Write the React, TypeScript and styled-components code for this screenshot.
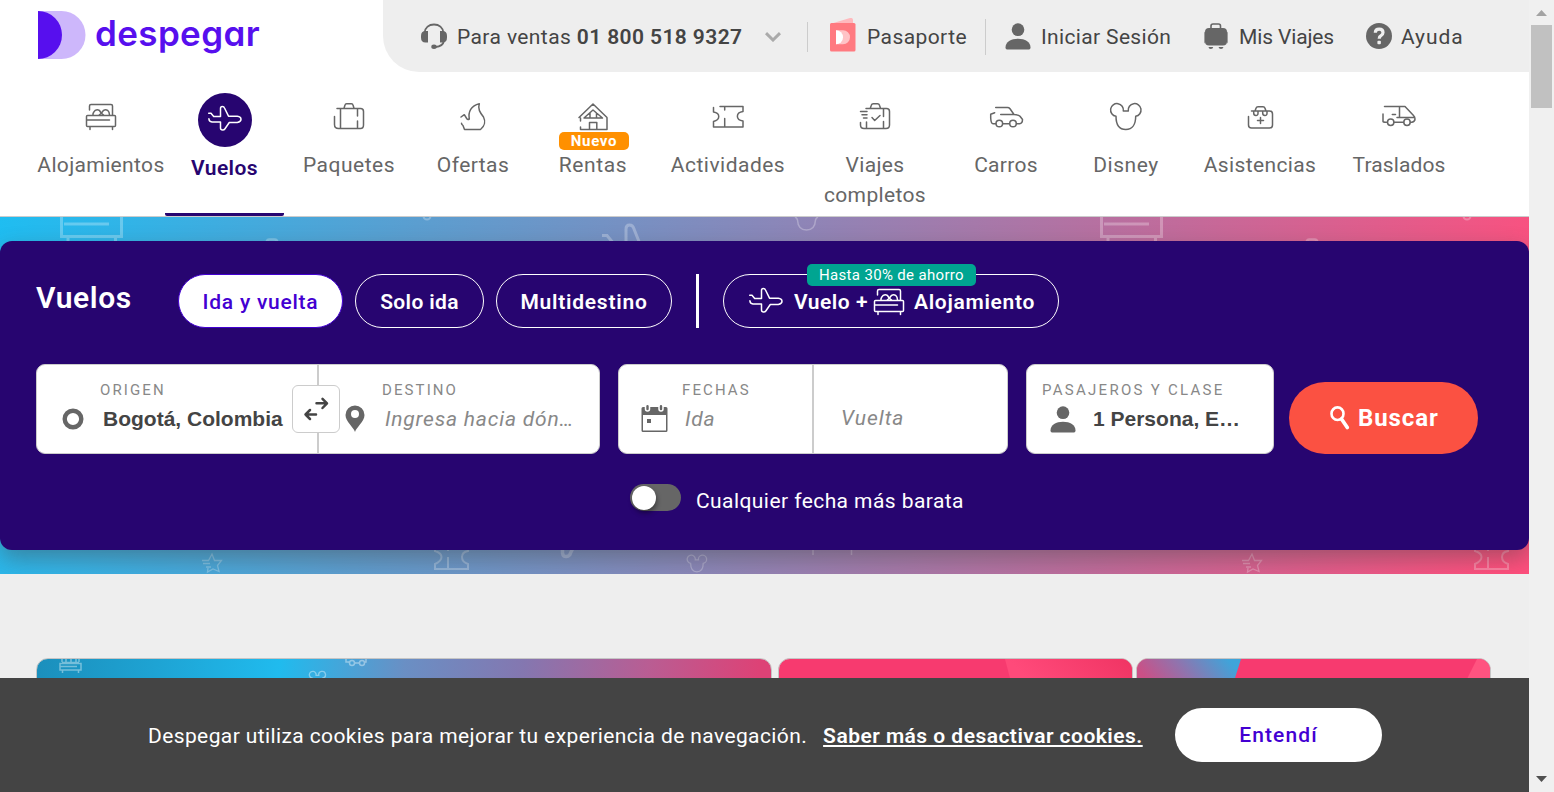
import React from 'react';
import styled, { createGlobalStyle, css } from 'styled-components';

const navy = '#270570';
const violet = '#4300d2';
const iconGray = '#666';

const GlobalStyle = createGlobalStyle`
  * { box-sizing: border-box; }
  body {
    margin: 0;
    overflow: hidden;
    background: #eee;
    font-family: Roboto, "Liberation Sans", sans-serif;
    font-size: 21px;
    line-height: 30px;
  }
  svg { display: block; flex: none; }
`;

const Window = styled.div`
  display: flex;
  width: 1554px;
  height: 792px;
  overflow: hidden;
`;

const Page = styled.div`
  display: flex;
  flex-direction: column;
  width: 1529px;
  height: 792px;
  background: #eee;
`;

const Text = styled.span<{ $track?: number; $width?: number }>`
  flex: none;
  white-space: nowrap;
  letter-spacing: ${(p) => p.$track ?? 0}px;
  ${(p) => p.$width && css`width: ${p.$width}px;`}
`;

/* ---------- header ---------- */

const Header = styled.header`
  flex: none;
  height: 217px;
  background: #fff;
  border-bottom: 1px solid #ccc;
`;

const HeaderTop = styled.div`
  display: flex;
  height: 72px;
`;

const Logo = styled.a`
  display: flex;
  width: 383px;
  padding: 11px 0 0 38px;
  color: #570fee;
`;

const LogoName = styled(Text)`
  margin-left: 9px;
  font: 600 35px/44px Inter, sans-serif;
  font-feature-settings: 'cv11';
`;

const TopBar = styled.div`
  display: flex;
  align-items: center;
  flex: 1;
  padding: 1px 0 0 38px;
  background: #eee;
  border-bottom-left-radius: 36px;
  color: #444;
`;

const TopItem = styled.div<{ $left?: number; $gap: number }>`
  display: flex;
  align-items: center;
  gap: ${(p) => p.$gap}px;
  margin-left: ${(p) => p.$left ?? 0}px;
`;

const SalesLine = styled(Text)`
  b { font-weight: 600; letter-spacing: 0.4px; }
`;

const TopDivider = styled.i<{ $left: number; $height: number }>`
  width: 1px;
  height: ${(p) => p.$height}px;
  margin-left: ${(p) => p.$left}px;
  background: #ccc;
`;

const Nav = styled.nav`
  display: flex;
  height: 144px;
  padding-left: 37px;
  color: #666;
`;

const NavItem = styled.a<{ $width: number; $active?: boolean }>`
  position: relative;
  display: flex;
  flex-direction: column;
  align-items: center;
  width: ${(p) => p.$width}px;
  height: 144px;
  padding-top: ${(p) => (p.$active ? 21 : 29)}px;
  text-align: center;
  ${(p) =>
    p.$active &&
    css`
      color: ${navy};
      font-weight: 600;
      border-bottom: 3px solid ${navy};
      border-radius: 2px;
    `}
`;

const NavLabel = styled.span<{ $track: number; $active?: boolean }>`
  margin-top: ${(p) => (p.$active ? 6 : 17)}px;
  letter-spacing: ${(p) => p.$track}px;
`;

const ActiveCircle = styled.span`
  display: grid;
  place-items: center;
  width: 54px;
  height: 54px;
  border-radius: 50%;
  background: ${navy};
`;

const NewBadge = styled.span`
  position: absolute;
  top: 60px;
  left: 27px;
  width: 70px;
  height: 18px;
  border-radius: 5px;
  background: #ff9000;
  color: #fff;
  font-size: 15px;
  font-weight: 700;
  line-height: 19px;
  letter-spacing: 0.7px;
`;

/* ---------- hero and search panel ---------- */

const Hero = styled.section`
  position: relative;
  flex: none;
  height: 357px;
  padding-top: 24px;
  overflow: hidden;
  background: linear-gradient(103deg, #1fbdf1 0%, #5b9ed0 26%, #8c86b8 49%, #c16b9b 73%, #ff4f7d 98%);
`;

const HeroArt = styled.svg`
  position: absolute;
  inset: 0;
`;

const Panel = styled.div`
  position: relative;
  height: 309px;
  padding: 33px 36px 0;
  border-radius: 12px;
  background: ${navy};
  box-shadow: 0 9px 22px rgba(70, 70, 70, 0.42);
  color: #fff;
`;

const Modes = styled.div`
  display: flex;
  height: 54px;
`;

const Title = styled.h1`
  width: 142px;
  margin: 0;
  padding-top: 9px;
  font-size: 30px;
  font-weight: 600;
  line-height: 30px;
  letter-spacing: 0.6px;
`;

const Pill = styled.button<{ $width: number; $track: number; $selected?: boolean }>`
  position: relative;
  display: flex;
  align-items: center;
  justify-content: center;
  width: ${(p) => p.$width}px;
  height: 54px;
  margin-right: 12px;
  padding: 2px 0 0;
  border: 1px solid ${(p) => (p.$selected ? violet : '#fff')};
  border-radius: 27px;
  background: ${(p) => (p.$selected ? '#fff' : 'transparent')};
  color: ${(p) => (p.$selected ? violet : '#fff')};
  font: ${(p) => (p.$selected ? 500 : 600)} 21px/30px Roboto, sans-serif;
  letter-spacing: ${(p) => p.$track}px;
`;

const ComboPill = styled(Pill)`
  justify-content: flex-start;
  padding-left: 24px;
`;

const ComboText = styled(Text)`
  margin-left: 7px;
`;

const Bar = styled.i`
  width: 3px;
  height: 54px;
  margin: 0 24px 0 12px;
  background: #fff;
`;

const SavingsBadge = styled.span`
  position: absolute;
  top: -11px;
  left: 83px;
  width: 169px;
  height: 22px;
  border-radius: 5px;
  background: #00a591;
  color: #fff;
  font: 400 15px/22px Roboto, sans-serif;
  letter-spacing: 0.33px;
`;

const Fields = styled.div`
  display: flex;
  align-items: flex-end;
  margin-top: 36px;
`;

const FieldBox = styled.div<{ $width: number; $after: number }>`
  position: relative;
  display: flex;
  width: ${(p) => p.$width}px;
  height: 90px;
  margin-right: ${(p) => p.$after}px;
  border: 1px solid #ccc;
  border-radius: 9px;
  background: #fff;
`;

const Cell = styled.div<{ $width?: number; $divided?: boolean }>`
  ${(p) => (p.$width ? css`width: ${p.$width}px;` : css`flex: 1;`)}
  padding-top: 15px;
  ${(p) => p.$divided && css`border-right: 2px solid #ccc;`}
`;

const FieldLabel = styled.div<{ $left: number; $track: number }>`
  padding-left: ${(p) => p.$left}px;
  color: #888;
  font-size: 15px;
  line-height: 20px;
  letter-spacing: ${(p) => p.$track}px;
`;

const FieldRow = styled.div<{ $left: number; $gap?: number; $top?: number }>`
  display: flex;
  align-items: center;
  gap: ${(p) => p.$gap ?? 0}px;
  height: 30px;
  margin-top: ${(p) => p.$top ?? 4}px;
  padding-left: ${(p) => p.$left}px;
`;

const Value = styled.span`
  white-space: nowrap;
  color: #444;
  font-family: 'Liberation Sans', Arial, sans-serif;
  font-weight: 700;
`;

const Placeholder = styled(Text)`
  color: #888;
  font-style: italic;
`;

const SwapButton = styled.button`
  position: absolute;
  top: 20px;
  left: 255px;
  width: 48px;
  height: 48px;
  padding: 0;
  border: 1px solid #ccc;
  border-radius: 6px;
  background: #fff;
`;

const SearchButton = styled.button`
  display: flex;
  align-items: center;
  width: 189px;
  height: 72px;
  padding: 0 0 0 40px;
  border: 0;
  border-radius: 36px;
  background: #fb5142;
  color: #fff;
  font: 700 24px/30px Roboto, sans-serif;
  letter-spacing: 0.9px;
`;

const FlexibleDates = styled.label`
  display: flex;
  align-items: flex-start;
  margin: 30px 0 0 594px;
`;

const Switch = styled.span`
  width: 51px;
  height: 27px;
  margin-right: 15px;
  padding: 1.5px;
  border-radius: 14px;
  background: #666;

  &::before {
    content: '';
    display: block;
    width: 24px;
    height: 24px;
    border-radius: 50%;
    background: #fff;
    box-shadow: 1px 3px 5px rgba(0, 0, 0, 0.4);
  }
`;

const FlexibleText = styled(Text)`
  margin-top: 2px;
`;

/* ---------- promo cards ---------- */

const Promos = styled.section`
  display: flex;
  flex: none;
  height: 104px;
  padding: 84px 0 0 36px;
  overflow: hidden;
`;

const PromoCard = styled.a<{ $width: number; $after: number }>`
  flex: none;
  width: ${(p) => p.$width}px;
  height: 40px;
  margin-right: ${(p) => p.$after}px;
  overflow: hidden;
  border: 1px solid #c5c5c5;
  border-radius: 12px;
  background: #f73a6f;
`;

const DealsCard = styled(PromoCard)`
  background: linear-gradient(95deg, #1b8fbc 0%, #1ea3d3 16%, #20bbee 33%, #6a8fc4 50%, #8477b0 66%, #b95d93 83%, #dd4276 98%);
`;

/* ---------- cookie notice ---------- */

const CookieBar = styled.footer`
  display: flex;
  flex: none;
  align-items: center;
  height: 114px;
  padding: 1px 0 0 148px;
  background: #444;
  color: #fff;
`;

const CookieLink = styled.a`
  margin-left: 16px;
  white-space: nowrap;
  font-weight: 600;
  letter-spacing: 0.47px;
  text-decoration: underline;
  text-decoration-thickness: 2px;
  text-underline-offset: 2px;
`;

const AcceptButton = styled.button`
  width: 207px;
  height: 54px;
  margin: -1px 0 0 auto;
  padding: 0;
  border: 0;
  border-radius: 27px;
  background: #fff;
  color: ${violet};
  font: 500 21px/30px Roboto, sans-serif;
  letter-spacing: 1.1px;
`;

const CookieContent = styled.div`
  display: flex;
  align-items: center;
  width: 1234px;
`;

/* ---------- scrollbar ---------- */

const Scrollbar = styled.aside`
  display: flex;
  flex-direction: column;
  align-items: center;
  width: 25px;
  height: 792px;
  padding: 10px 0;
  background: #f0f0f0;
`;

const Thumb = styled.div`
  width: 21px;
  height: 83px;
  margin: 9px 0 auto;
  background: #c1c1c1;
`;

/* ---------- icons ---------- */

const LineIcon = ({ children, color = iconGray }: { children: React.ReactNode; color?: string }) => (
  <svg width="36" height="32" viewBox="0 0 36 32" fill="none" stroke={color} strokeWidth="1.5" strokeLinecap="round" strokeLinejoin="round">
    {children}
  </svg>
);

const bed = (
  <g transform="translate(0 -1)">
    <path d="M6.5 10V6Q6.5 4.5 8 4.5H28Q29.5 4.5 29.5 6V15" />
    <path d="M10 15v-1.3Q10.300 12.500 12.300 10.300Q14.300 9 16.300 10.300L18.300 13.200L20.600 10.300Q22.600 9 24.600 10.300Q26.500 12 26.500 15M16.300 15l2-1.800 2.200 1.800" />
    <rect x="3.500" y="15.500" width="29" height="11" rx="1" />
    <path d="M4 20H26.500M7 27v2.500M29.500 27v2.500" />
  </g>
);

const plane = (
  <path d="M1.700 9.300H4L6.700 12.500H13.500V4.500Q13.500 2.500 15.300 2.500Q17 2.500 17.500 4L21.500 12.200H30.300Q34 12.700 34 15.200T30.300 18.500H22.300L17.800 25Q17.200 26 15.700 26Q13.500 26 13.500 24V18H5Q1.900 17.500 1.900 14.800" />
);

const mickey = 'M15.300 10A6.400 6.400 0 1 0 8 15.300C8 23 11 28.600 17.800 28.600C24.500 28.600 27.700 23 27.700 15.300A6.400 6.400 0 1 0 20.300 10Z';
const ticket = 'M10 5.500H33V10.500C25.500 11.500 25.500 19 33 20V26H3.500V20.500C10.500 18.500 10.500 12 3.500 11V6.500M14.700 5.500V9M14.700 17.500V26';

const luggage = <path d="M6 7.500H29.500Q32.500 7.500 32.500 10.500V24Q32.500 27.500 29.500 27.500H7.500Q3.500 27.500 3.500 23.500V15.500M9.500 7.500V27M26.500 7.500V15M26.500 20V27M13 7.200L14 4Q14.300 2.700 15.500 2.700H20.500Q21.700 2.700 22 4L23 7.200" />;

const flame = <path d="M6 16L9.300 13.700L11.700 17.500Q12.700 19 14.300 18C13 11 16 4.500 24.300 2.700C22.500 8 25 11.500 28.500 16C30.500 20 30 25 25.500 28.500H9.500L8 24.500Q6.500 23.500 6.500 22.300" />;

const house = <path d="M4 16.500L18 3L32 16.500M9 17L18 9L27.500 17ZM15 17V12M21.500 17V12M32 17V28.500H20.500M5.500 17V20M5.500 26V28.500H20.500M14.500 28.500V21.500H21.800V28.500" />;

const express = <path d="M9 7.500H29.500Q32.500 7.500 32.500 10.500V24Q32.500 27.500 29 27.500H7Q3.500 27.500 3.500 24V21.500M9.500 21V27.300M26.500 7.500V15.500M26.500 20.500V27.300M3.500 10.500H10M5 13.800H10M6.500 17H10M15 16.500L17.700 19.500L23 14.500M13.300 7.200L14.300 4.300Q14.800 2.700 16.300 2.700H20.500Q22 2.700 22.500 4.300L23.500 7.200" />;

const car = (
  <>
    <path d="M7.700 6.500H19.500Q21 6.500 22 7.700L26 13.500H12.700M26 13.500Q31 14 32 15.200L34.500 18.500Q34.500 22.500 31.500 22.700H28.500M6.700 11.700L2.700 13.200V17Q3 22.700 5 22.700H7.800M14.800 22.700H21.500" />
    <circle cx="11.300" cy="22.500" r="3.300" />
    <circle cx="25" cy="22.500" r="3.300" />
  </>
);

const medkit = <path d="M9.500 10H27.500Q30.500 10 30.500 13V24Q30.500 27 27.500 27H9.500Q6.500 27 6.500 24V15.500M13 10L14 7.200Q14.500 5.700 16 5.700H21Q22.500 5.700 23 7.200L24 10M11.700 10V12Q11.700 14.500 13.900 14.500T16 12V10M20.700 10V12Q20.700 14.500 22.900 14.500T25 12V10M18.500 16.500V22.500M15.500 19.500H21.500" />;

const van = (
  <>
    <path d="M3.500 5.500H24L32.500 14.500Q34 16 34 18Q34 20.500 31 21.300H29.500M18.500 5.500V16.500M16 16.500H33M2 13V20.500Q2 21.300 5.500 21.300M13 21.300H22.500M11.300 13.500H14.500" />
    <circle cx="9.700" cy="21.300" r="3.200" />
    <circle cx="26" cy="21.300" r="3.200" />
  </>
);

const PersonIcon = () => (
  <svg width="26" height="27" viewBox="0 0 26 27" fill={iconGray}>
    <ellipse cx="13" cy="6.700" rx="6.300" ry="6.400" />
    <path d="M.5 24.500C.5 18.500 6 15.700 13 15.700S25.500 18.500 25.500 24.500Q25.500 26.500 24 26.500H2Q.5 26.500 .5 24.500Z" />
  </svg>
);

const HeadsetIcon = () => (
  <svg width="26" height="27" viewBox="0 0 26 27">
    <path d="M3.500 10C4 4.500 8 1.500 13 1.500S22 4.500 22.500 10M23 17.500Q22 23.500 14.500 24" fill="none" stroke={iconGray} strokeWidth="1.800" />
    <path d="M7 8V19.500H4.500Q0 19.500 0 14.500V13Q0 8 4.500 8ZM19 8V19.500H21.500Q26 19.500 26 14.500V13Q26 8 21.500 8Z" fill={iconGray} />
    <ellipse cx="13" cy="23.800" rx="2.700" ry="2.200" fill={iconGray} />
  </svg>
);

const PassportIcon = () => (
  <svg width="26" height="38" viewBox="0 0 26 38">
    <path d="M0 6L20 0Q23 -.5 23 2V8H0Z" fill="#ffb9bd" />
    <rect y="5" width="25.500" height="28.500" rx="1.500" fill="#ff7a80" />
    <path d="M6 12.300H13A7 7 0 0 1 13 26.300H6Z" fill="#ffc3c6" />
    <path d="M6 12.300A7 7 0 0 1 6 26.300Z" fill="#fff" />
  </svg>
);

const SuitcaseIcon = () => (
  <svg width="26" height="28" viewBox="0 0 26 28" fill={iconGray}>
    <path d="M8 5.500V3Q8 1 10 1H15.500Q17.500 1 17.500 3V5.500" fill="none" stroke={iconGray} strokeWidth="1.600" />
    <rect x="2" y="5" width="22" height="17.500" rx="4" />
    <path d="M1 9.500V19.500L1.600 20.500V8.500ZM25 9.500V19.500L24.400 20.500V8.500ZM5.500 24H10.200Q10 26 7.800 26T5.500 24ZM15.500 24H20.500Q20 26 18 26T15.500 24Z" />
  </svg>
);

const HelpIcon = () => (
  <svg width="26" height="27" viewBox="0 0 26 27">
    <circle cx="13" cy="13" r="13" fill={iconGray} />
    <path d="M9.300 9.800Q9.300 6.200 13.200 6.200Q17 6.200 17 9.500Q17 11.500 15 12.600Q13.200 13.600 13.200 15.700" fill="none" stroke="#eee" strokeWidth="3.200" />
    <rect x="11.400" y="17.800" width="3.500" height="3.500" rx="1" fill="#eee" />
  </svg>
);

const HeroPattern = () => (
  <g fill="none" stroke="#fff" strokeOpacity="0.28">
    <path strokeWidth="3" d="M61.500 -10V19.500H121.500V-10M64 7H109M68 21V30M115.500 21V30" />
    <path strokeWidth="2.500" d="M266.500 30V26Q266.500 22.500 269.500 22.500H274.500Q277.500 22.500 277.500 26V30" />
    <circle cx="427" cy="-1" r="3.500" strokeWidth="2" />
    <path strokeWidth="3" d="M602 18.500H607L614 27M626 27V12Q626 8 629.500 8T634 12L640 27" />
    <path strokeWidth="1.500" d="M795 0Q797 1 797.500 3Q798 13 806.500 13T815.500 3Q816 1 818 0" />
    <path strokeWidth="3.500" d="M562.500 330V336Q563 340 566.500 339.500T570.500 336L573.500 330" />
    <path strokeWidth="1.500" d="M813 330V338M851.500 330V338" />
    <path strokeWidth="1.300" d="M202 343.500H208.500L212 337L214.500 343.500H221.500L217.500 348.500L219 354.500L213 352L207.500 355L208 351M203 346.500H210M206 350H211" />
    <path strokeWidth="2" d="M435 330V334Q441.500 336 441.500 340T435 347V352H468V347Q462 345 462 340T468 334V330M448 330V334M448 340V352" />
    <path strokeWidth="2" transform="translate(685.500 336.500) scale(.64)" d={mickey} />
  </g>
);

/* ---------- data ---------- */

type NavEntry = { label: string; width: number; track: number; icon: React.ReactNode; active?: boolean; badge?: string };

const navEntries: NavEntry[] = [
  { label: 'Alojamientos', width: 128, track: 0.36, icon: bed },
  { label: 'Vuelos', width: 119, track: 0.4, icon: plane, active: true },
  { label: 'Paquetes', width: 130, track: 0.52, icon: luggage },
  { label: 'Ofertas', width: 118, track: 0.42, icon: flame },
  { label: 'Rentas', width: 122, track: 0.6, icon: house, badge: 'Nuevo' },
  { label: 'Actividades', width: 148, track: 0.48, icon: <path d={ticket} /> },
  { label: 'Viajes completos', width: 146, track: 0.36, icon: express },
  { label: 'Carros', width: 116, track: 0.3, icon: car },
  { label: 'Disney', width: 124, track: 0.55, icon: <path d={mickey} /> },
  { label: 'Asistencias', width: 144, track: 0.38, icon: medkit },
  { label: 'Traslados', width: 134, track: 0.1, icon: van },
];

export default function App() {
  return (
    <Window>
      <GlobalStyle />
      <Page>
        <Header>
          <HeaderTop>
            <Logo>
              <svg width="48" height="48" viewBox="0 0 48 48">
                <path d="M0 0H23.500A24 24 0 0 1 23.500 48H0Z" fill="#cdb7fb" />
                <path d="M0 0A24 24 0 0 1 0 48Z" fill="#570fee" />
              </svg>
              <LogoName $track={0.38}>despegar</LogoName>
            </Logo>
            <TopBar>
              <TopItem $gap={10}>
                <HeadsetIcon />
                <SalesLine $track={0.4} $width={286}>Para ventas <b>01 800 518 9327</b></SalesLine>
              </TopItem>
              <TopItem $gap={0} $left={22}>
                <svg width="16" height="10" viewBox="0 0 16 10" fill="none" stroke="#aaa" strokeWidth="3">
                  <path d="M1 1.200L8 8L15 1.200" />
                </svg>
              </TopItem>
              <TopDivider $left={26} $height={30} />
              <TopItem $gap={11} $left={22}>
                <PassportIcon />
                <Text $track={0.42} $width={100}>Pasaporte</Text>
              </TopItem>
              <TopDivider $left={18} $height={36} />
              <TopItem $gap={10} $left={19}>
                <PersonIcon />
                <Text $track={0.35} $width={130}>Iniciar Sesión</Text>
              </TopItem>
              <TopItem $gap={10} $left={32}>
                <SuitcaseIcon />
                <Text $track={-0.14} $width={95}>Mis Viajes</Text>
              </TopItem>
              <TopItem $gap={9} $left={32}>
                <HelpIcon />
                <Text $track={0.9}>Ayuda</Text>
              </TopItem>
            </TopBar>
          </HeaderTop>
          <Nav>
            {navEntries.map((n) => (
              <NavItem key={n.label} $width={n.width} $active={n.active}>
                {n.active ? (
                  <ActiveCircle><LineIcon color="#fff">{n.icon}</LineIcon></ActiveCircle>
                ) : (
                  <LineIcon>{n.icon}</LineIcon>
                )}
                {n.badge && <NewBadge>{n.badge}</NewBadge>}
                <NavLabel $track={n.track} $active={n.active}>{n.label}</NavLabel>
              </NavItem>
            ))}
          </Nav>
        </Header>

        <Hero>
          <HeroArt width="1529" height="357" viewBox="0 0 1529 357">
            <HeroPattern />
            <g transform="translate(1040 0)"><HeroPattern /></g>
          </HeroArt>
          <Panel>
            <Modes>
              <Title>Vuelos</Title>
              <Pill $width={165} $track={0.75} $selected>Ida y vuelta</Pill>
              <Pill $width={129} $track={0.35}>Solo ida</Pill>
              <Pill $width={176} $track={0.75}>Multidestino</Pill>
              <Bar />
              <ComboPill $width={336} $track={0.7}>
                <LineIcon color="#fff">{plane}</LineIcon>
                <ComboText $width={80} $track={0.5}>Vuelo +</ComboText>
                <LineIcon color="#fff">{bed}</LineIcon>
                <ComboText $track={0.7}>Alojamiento</ComboText>
                <SavingsBadge>Hasta 30% de ahorro</SavingsBadge>
              </ComboPill>
            </Modes>

            <Fields>
              <FieldBox $width={564} $after={18}>
                <Cell $width={282} $divided>
                  <FieldLabel $left={63} $track={2.1}>ORIGEN</FieldLabel>
                  <FieldRow $left={25} $gap={19}>
                    <svg width="22" height="22" viewBox="0 0 22 22" fill="none" stroke={iconGray} strokeWidth="4.400">
                      <circle cx="11" cy="11" r="8.300" />
                    </svg>
                    <Value>Bogotá, Colombia</Value>
                  </FieldRow>
                </Cell>
                <Cell>
                  <FieldLabel $left={63} $track={2.1}>DESTINO</FieldLabel>
                  <FieldRow $left={26} $gap={20}>
                    <svg width="20" height="28" viewBox="0 0 20 28">
                      <path d="M10 27C8.500 22 .5 16.500 .5 10A9.500 9.500 0 0 1 19.500 10C19.500 16.500 11.500 22 10 27Z" fill={iconGray} />
                      <circle cx="10" cy="9" r="4" fill="#fff" />
                    </svg>
                    <Placeholder $track={0.79}>Ingresa hacia dón…</Placeholder>
                  </FieldRow>
                </Cell>
                <SwapButton>
                  <svg width="46" height="46" viewBox="0 0 46 46" fill="none" stroke="#444" strokeWidth="2.500" strokeLinecap="round" strokeLinejoin="round">
                    <path d="M23.500 17.300H33.500M29.500 12.800L34 17.300L29.500 22M23 28.500H12.500M17 24L12.500 28.500L17 33" />
                  </svg>
                </SwapButton>
              </FieldBox>

              <FieldBox $width={390} $after={18}>
                <Cell $width={195} $divided>
                  <FieldLabel $left={63} $track={2.1}>FECHAS</FieldLabel>
                  <FieldRow $left={22} $gap={17}>
                    <svg width="27" height="28" viewBox="0 0 27 28">
                      <path d="M2 2H25Q26.500 2 26.500 3.500V25.500Q26.500 27 25 27H2Q.5 27 .5 25.500V3.500Q.5 2 2 2ZM2 10V25.500H25V10Z" fill={iconGray} fillRule="evenodd" />
                      <path d="M6.500 0V4M20 0V4" stroke="#fff" strokeWidth="5.500" strokeLinecap="round" />
                      <path d="M6.500 1.200V4M20 1.200V4" stroke={iconGray} strokeWidth="2.400" strokeLinecap="round" />
                      <rect x="6" y="14" width="4" height="4" fill={iconGray} />
                    </svg>
                    <Placeholder $track={0.7}>Ida</Placeholder>
                  </FieldRow>
                </Cell>
                <Cell>
                  <FieldRow $left={27} $top={23}>
                    <Placeholder $track={1}>Vuelta</Placeholder>
                  </FieldRow>
                </Cell>
              </FieldBox>

              <FieldBox $width={248} $after={15}>
                <Cell>
                  <FieldLabel $left={15} $track={2.28}>PASAJEROS Y CLASE</FieldLabel>
                  <FieldRow $left={23} $gap={17}>
                    <PersonIcon />
                    <Value>1 Persona, E…</Value>
                  </FieldRow>
                </Cell>
              </FieldBox>

              <SearchButton>
                <svg width="29" height="26" viewBox="0 0 29 26" fill="none" stroke="#fff" strokeLinecap="round">
                  <ellipse cx="8.500" cy="8.700" rx="6" ry="6.300" strokeWidth="2.600" />
                  <path d="M12.500 14L18.300 22.500" strokeWidth="3.700" />
                </svg>
                Buscar
              </SearchButton>
            </Fields>

            <FlexibleDates>
              <Switch />
              <FlexibleText $track={0.43}>Cualquier fecha más barata</FlexibleText>
            </FlexibleDates>
          </Panel>
        </Hero>

        <Promos>
          <DealsCard $width={736} $after={6}>
            <svg width="734" height="38" viewBox="0 0 734 38" fill="none" stroke="#fff" strokeOpacity="0.4" strokeWidth="1.500">
              <path d="M25 0V3M25 3.500H42M42 0V3M23 4.500H44V11H23ZM23 7.500H40M25.500 11V14M41.500 11V14M29 0V3M34 0V3M39 0V3" />
              <path d="M309 0V3H312M318 4H322M328 3H329V0" />
              <circle cx="315" cy="4" r="2.500" />
              <circle cx="325" cy="4" r="2.500" />
              <path strokeWidth="2.500" transform="translate(271 11) scale(.53)" d={mickey} />
            </svg>
          </DealsCard>
          <PromoCard $width={355} $after={3}>
            <svg width="354" height="38" viewBox="0 0 354 38">
              <defs>
                <linearGradient id="shine" x1="0" y1="0.3" x2="1" y2="0">
                  <stop offset="0.100" stopColor="#ff4a7a" />
                  <stop offset="1" stopColor="#f03463" />
                </linearGradient>
              </defs>
              <path d="M226 0H354V38H236Z" fill="url(#shine)" />
            </svg>
          </PromoCard>
          <PromoCard $width={355} $after={0}>
            <svg width="353" height="38" viewBox="0 0 353 38">
              <defs>
                <linearGradient id="corner" gradientUnits="userSpaceOnUse" x1="20" y1="34" x2="80" y2="-14">
                  <stop offset="0" stopColor="#cb5086" />
                  <stop offset="0.450" stopColor="#9173ad" />
                  <stop offset="1" stopColor="#3fa4da" />
                </linearGradient>
              </defs>
              <path d="M0 0H104L92 38H0Z" fill="url(#corner)" />
              <path d="M340 0H353V38H321Z" fill="#ff5380" />
            </svg>
          </PromoCard>
        </Promos>

        <CookieBar>
          <CookieContent>
            <Text $track={0.39}>Despegar utiliza cookies para mejorar tu experiencia de navegación.</Text>
            <CookieLink>Saber más o desactivar cookies.</CookieLink>
            <AcceptButton>Entendí</AcceptButton>
          </CookieContent>
        </CookieBar>
      </Page>

      <Scrollbar>
        <svg width="11" height="6" viewBox="0 0 11 6"><path d="M0 6L5.500 0L11 6Z" fill="#a3a3a3" /></svg>
        <Thumb />
        <svg width="11" height="6" viewBox="0 0 11 6"><path d="M0 0H11L5.500 6Z" fill="#505050" /></svg>
      </Scrollbar>
    </Window>
  );
}
